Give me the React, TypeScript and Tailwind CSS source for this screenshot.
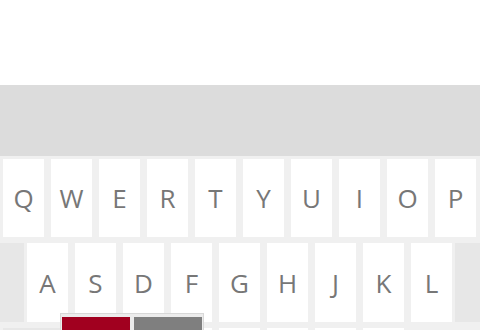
const ROW1 = ['Q', 'W', 'E', 'R', 'T', 'Y', 'U', 'I', 'O', 'P'];
const ROW2 = ['A', 'S', 'D', 'F', 'G', 'H', 'J', 'K', 'L'];
const ROW3_KEYS = 7;

function Key({ label, tall = 'h-[78px]' }: { label?: string; tall?: string }) {
  return (
    <div
      className={`flex w-[41px] shrink-0 items-center justify-center bg-white text-[26px] font-medium leading-none text-[#777777] ${tall}`}
    >
      {label}
    </div>
  );
}

export default function App() {
  return (
    <div
      className="relative h-[330px] w-[480px] overflow-hidden bg-white"
      style={{ fontFamily: '"Open Sans", "Noto Sans", sans-serif' }}
    >
      <div className="h-[85px] bg-white" />
      <div className="h-[71px] bg-[#dcdcdc]" />

      <div className="flex flex-col gap-[6px] bg-[#f0f0f0] pt-[3px] pb-[6px]">
        <div className="flex gap-[7px] pl-[3px]">
          {ROW1.map((k) => (
            <Key key={k} label={k} />
          ))}
        </div>

        <div className="flex h-[79px]">
          <div className="w-[24px] bg-[#e7e7e7]" />
          <div className="flex gap-[7px] pl-[3px] pr-[3px]">
            {ROW2.map((k) => (
              <Key key={k} label={k} tall="h-[79px]" />
            ))}
          </div>
          <div className="flex-1 bg-[#e7e7e7]" />
        </div>

        {/* third row, mostly below the fold */}
        <div className="flex gap-[7px] pl-[3px]">
          <div className="h-[78px] w-[65px] shrink-0 bg-[#e7e7e7]" />
          {Array.from({ length: ROW3_KEYS }, (_, i) => (
            <Key key={i} />
          ))}
        </div>
      </div>

      {/* color picker popup */}
      <div className="absolute left-[60px] top-[313px] flex gap-[4px] border border-[#d8d8d8] bg-[#ececec] px-[1px] pt-[3px] pb-[20px]">
        <div className="h-[30px] w-[68px] bg-[#a1001f]" />
        <div className="h-[30px] w-[68px] bg-[#7f7f7f]" />
      </div>
    </div>
  );
}
